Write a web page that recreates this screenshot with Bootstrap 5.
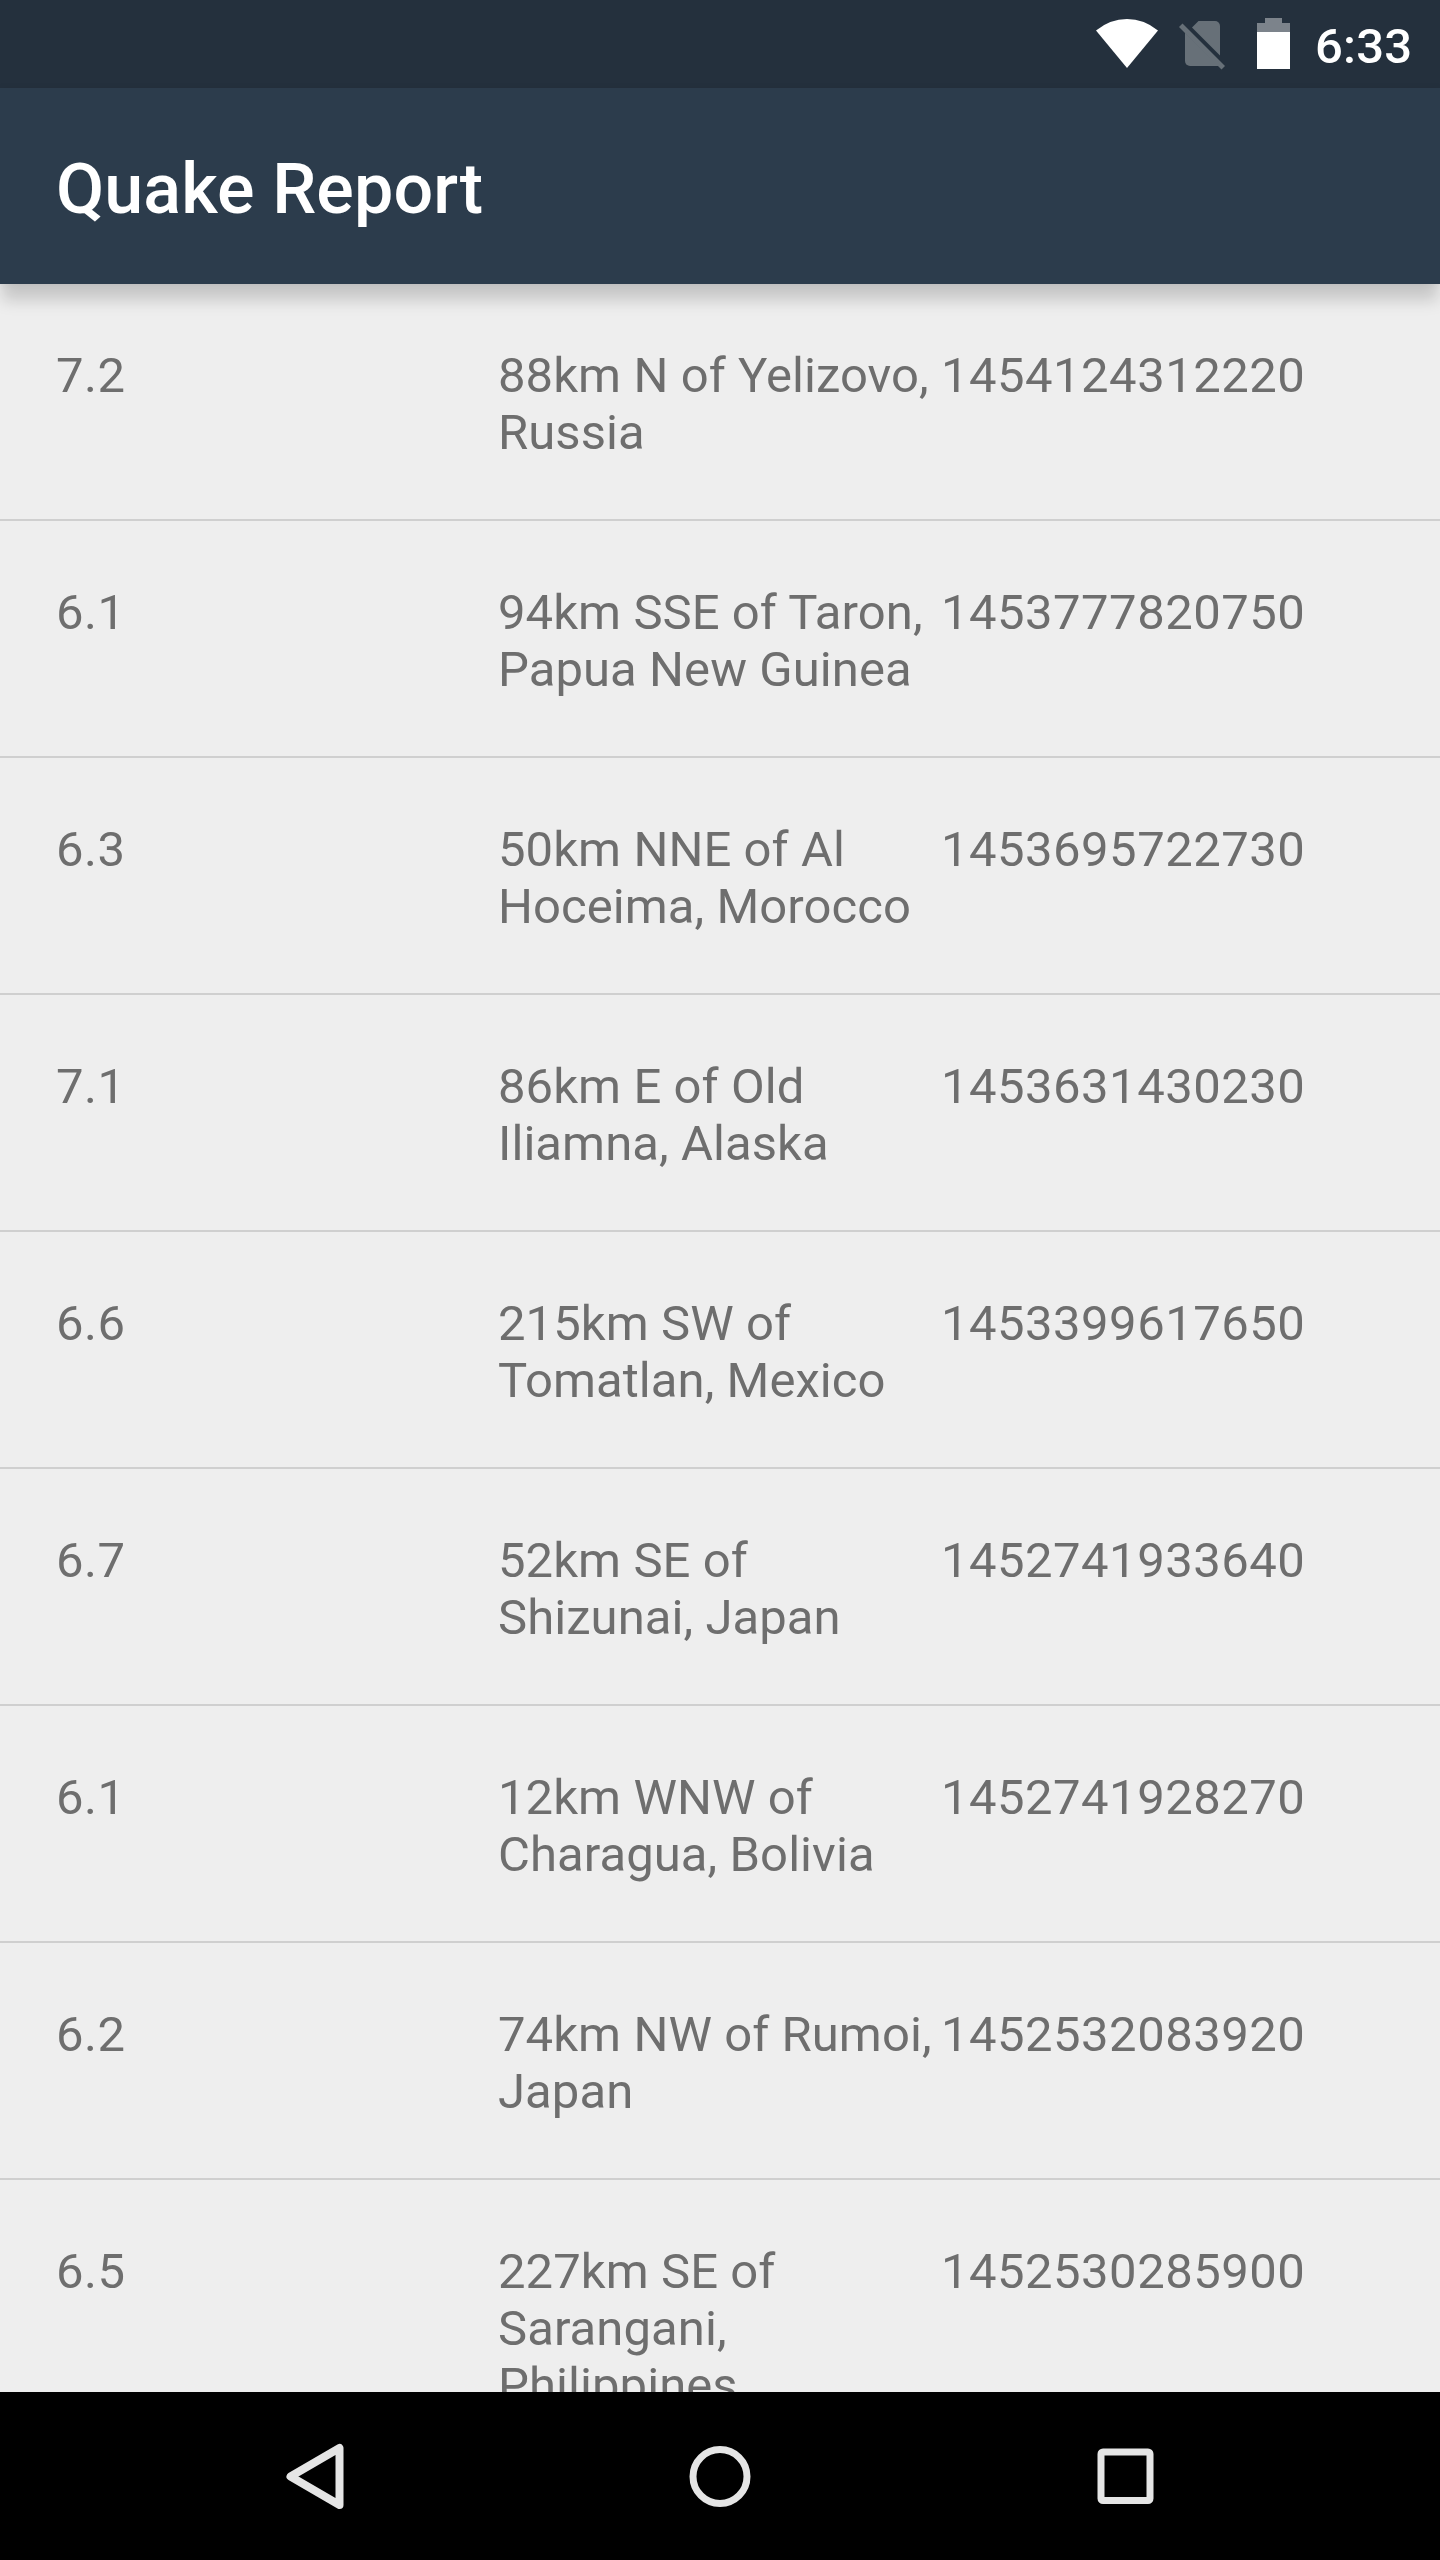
<!DOCTYPE html>
<html lang="en">
<head>
<meta charset="utf-8">
<meta name="viewport" content="width=device-width, initial-scale=1">
<title>Quake Report</title>
<link href="https://cdn.jsdelivr.net/npm/bootstrap@5.3.0/dist/css/bootstrap.min.css" rel="stylesheet">
<style>
  body { font-family: Roboto, "Liberation Sans", sans-serif; background: #eee; }
  .screen { width: 1440px; height: 2560px; background: #eee; }
  .status { height: 88px; background: #24303d; }
  .clock { width: 130px; font-size: 49px; font-weight: 500; line-height: 88px; letter-spacing: .2px; padding: 3px 0 0 5px; height: 88px; }
  .appbar { height: 196px; background: #2c3c4c; padding: 6px 56px 0; z-index: 2; box-shadow: 0 18px 15px -2px rgba(0,0,0,.17), 0 0 7px rgba(0,0,0,.06); }
  .appbar h1 { font-size: 70px; font-weight: 500; line-height: 82px; letter-spacing: .1px; }
  .quakes { font-size: 49px; line-height: 57px; color: #6e6e6e; min-height: 0; }
  .quake { flex: none; height: 237px; padding: 63px 56px 0; border-bottom: 2px solid #cfcfcf; }
  .mag { width: 442px; letter-spacing: .48px; }
  .place { width: 443px; letter-spacing: .07px; }
  .stamp { letter-spacing: .48px; }
  .softkeys { height: 168px; background: #000; z-index: 2; }
</style>
</head>
<body>
<div class="screen d-flex flex-column overflow-hidden">
  <div class="status d-flex flex-shrink-0 justify-content-end text-white">
    <svg class="d-block" width="230" height="88" viewBox="1080 0 230 88" aria-hidden="true">
      <path fill="#fff" d="M1096 30.500Q1110 19 1127 19T1158 30.500L1127 68Z"/>
      <g fill="#677078">
        <path d="M1185 32.500L1219 66H1190a5 5 0 0 1-5-5Z"/>
        <path d="M1192 27.500L1198.500 21H1215a5 5 0 0 1 5 5V55.500Z"/>
        <path d="M1182.500 23.500L1225 66L1221.500 69.500L1179 27Z"/>
      </g>
      <path fill="#7c838b" d="M1265 18h17v5h8v9h-33v-9h8Z"/>
      <path fill="#fff" d="M1257 32h33v37h-33Z"/>
    </svg>
    <div class="clock">6:33</div>
  </div>
  <header class="appbar position-relative d-flex flex-shrink-0 align-items-center text-white">
    <h1 class="m-0">Quake Report</h1>
  </header>
  <main class="quakes flex-grow-1 d-flex flex-column overflow-hidden">
    <div class="quake d-flex"><div class="mag">7.2</div><div class="place">88km N of Yelizovo,<br>Russia</div><div class="stamp">1454124312220</div></div>
    <div class="quake d-flex"><div class="mag">6.1</div><div class="place">94km SSE of Taron,<br>Papua New Guinea</div><div class="stamp">1453777820750</div></div>
    <div class="quake d-flex"><div class="mag">6.3</div><div class="place">50km NNE of Al<br>Hoceima, Morocco</div><div class="stamp">1453695722730</div></div>
    <div class="quake d-flex"><div class="mag">7.1</div><div class="place">86km E of Old<br>Iliamna, Alaska</div><div class="stamp">1453631430230</div></div>
    <div class="quake d-flex"><div class="mag">6.6</div><div class="place">215km SW of<br>Tomatlan, Mexico</div><div class="stamp">1453399617650</div></div>
    <div class="quake d-flex"><div class="mag">6.7</div><div class="place">52km SE of<br>Shizunai, Japan</div><div class="stamp">1452741933640</div></div>
    <div class="quake d-flex"><div class="mag">6.1</div><div class="place">12km WNW of<br>Charagua, Bolivia</div><div class="stamp">1452741928270</div></div>
    <div class="quake d-flex"><div class="mag">6.2</div><div class="place">74km NW of Rumoi,<br>Japan</div><div class="stamp">1452532083920</div></div>
    <div class="quake d-flex"><div class="mag">6.5</div><div class="place">227km SE of<br>Sarangani,<br>Philippines</div><div class="stamp">1452530285900</div></div>
  </main>
  <nav class="softkeys position-relative flex-shrink-0" aria-label="System navigation">
    <svg class="d-block" width="1440" height="168" viewBox="0 0 1440 168" fill="none" stroke="#e5e5e5" stroke-width="7" stroke-linejoin="round">
      <path stroke-width="8" d="M290.500 84.500L339.500 56V113Z"/>
      <circle cx="720" cy="84.500" r="27"/>
      <rect x="1101" y="60" width="49" height="48.500" rx="2"/>
    </svg>
  </nav>
</div>
<script src="https://cdn.jsdelivr.net/npm/bootstrap@5.3.0/dist/js/bootstrap.bundle.min.js"></script>
</body>
</html>
